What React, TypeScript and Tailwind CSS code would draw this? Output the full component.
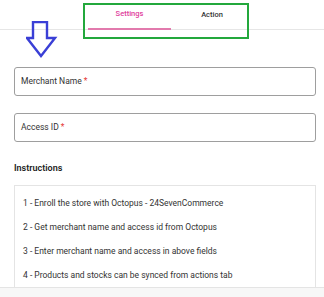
import React from "react";

export default function App() {
  const items = [
    "1 - Enroll the store with Octopus - 24SevenCommerce",
    "2 - Get merchant name and access id from Octopus",
    "3 - Enter merchant name and access in above fields",
    "4 - Products and stocks can be synced from actions tab",
  ];
  return (
    <div
      className="relative w-[324px] h-[297px] bg-white overflow-hidden text-[#333]"
      style={{ fontFamily: "Roboto, 'Liberation Sans', sans-serif" }}
    >
      {/* Tabs */}
      <div className="h-[30px] border-b border-[#e6e6e6] flex">
        <div className="ml-[88px] w-[83px] h-[30px] flex items-center justify-center border-b-2 border-[#e27aad] text-[7.5px] font-medium text-[#e0409c] pb-[1px]">
          Settings
        </div>
        <div className="w-[82px] h-[30px] flex items-center justify-center text-[7.5px] font-medium text-[#333] pb-[1px]">
          Action
        </div>
      </div>

      {/* Form */}
      <div className="px-[14px] pt-[37px] flex flex-col gap-[17px]">
        <div className="h-[29px] w-[302px] border border-[#9e9e9e] rounded-[3px] flex items-center px-[6px] text-[8.5px]">
          Merchant Name<span className="text-[#e53935] ml-[2px]">*</span>
        </div>
        <div className="h-[29px] w-[302px] border border-[#9e9e9e] rounded-[3px] flex items-center px-[6px] text-[8.5px]">
          Access ID<span className="text-[#e53935] ml-[2px]">*</span>
        </div>
      </div>

      <div className="px-[14px] mt-[20px] text-[9px] font-semibold text-[#222] leading-[12px]">
        Instructions
      </div>

      <div className="mx-[14px] mt-[11px] w-[302px] h-[102px] border border-b-0 border-[#e4e4e4] pl-[8px] pt-[11px] flex flex-col gap-[12px] text-[8.5px] leading-[12px]">
        {items.map((t) => (
          <div key={t}>{t}</div>
        ))}
      </div>
      <div className="h-[10px] border-t border-[#e4e4e4] bg-[#f7f7f7]" />

      {/* Annotation: green box */}
      <div className="absolute left-[83px] top-[3px] w-[166px] h-[36px] border-2 border-[#23a83c]" />

      {/* Annotation: blue arrow */}
      <svg
        className="absolute left-[26px] top-[21px]"
        width="32"
        height="38"
        viewBox="0 0 32 38"
      >
        <path
          d="M7 1 H21 V17 H29 L15 35 L1 17 H7 Z"
          fill="none"
          stroke="#3a3fd6"
          strokeWidth="2.4"
          strokeLinejoin="miter"
        />
      </svg>
    </div>
  );
}
